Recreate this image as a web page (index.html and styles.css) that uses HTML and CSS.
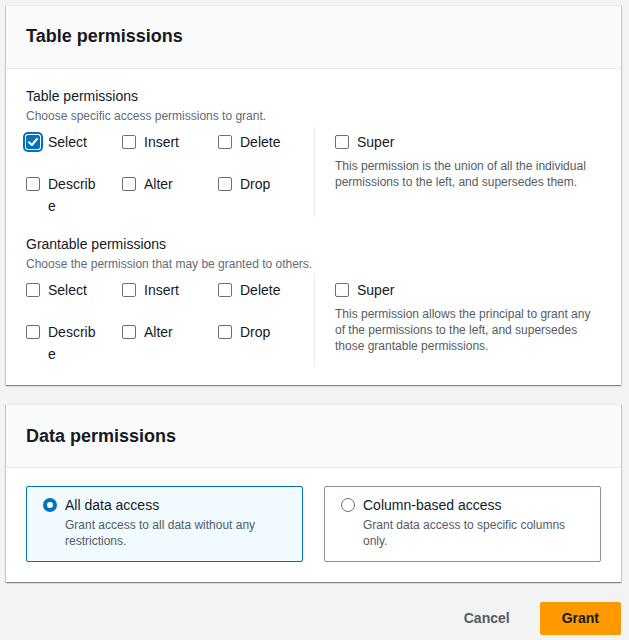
FILE: index.html
```html
<!DOCTYPE html>
<html lang="en">
<head>
<meta charset="utf-8">
<title>Permissions</title>
<link rel="stylesheet" href="styles.css">
</head>
<body>
<div class="page">
  <section class="card">
    <div class="card-header"><h2 class="card-title">Table permissions</h2></div>
    <div class="card-body">
      <div class="group">
        <div class="group-label">Table permissions</div>
        <div class="group-desc">Choose specific access permissions to grant.</div>
        <div class="perm-grid">
          <div class="perm-left">
            <div class="cb-item"><span class="cb cb-checked"><svg viewBox="0 0 14 14" width="14" height="14"><path d="M3 7.2 L5.9 10 L11 4" fill="none" stroke="#fff" stroke-width="2" stroke-linecap="round" stroke-linejoin="round"/></svg></span><span class="cb-label">Select</span></div>
            <div class="cb-item"><span class="cb"></span><span class="cb-label">Insert</span></div>
            <div class="cb-item"><span class="cb"></span><span class="cb-label">Delete</span></div>
            <div class="cb-item"><span class="cb"></span><span class="cb-label">Describe</span></div>
            <div class="cb-item"><span class="cb"></span><span class="cb-label">Alter</span></div>
            <div class="cb-item"><span class="cb"></span><span class="cb-label">Drop</span></div>
          </div>
          <div class="perm-right">
            <div class="cb-item"><span class="cb"></span><span class="cb-label cb-label-wide">Super</span></div>
            <p class="super-desc">This permission is the union of all the individual permissions to the left, and supersedes them.</p>
          </div>
        </div>
      </div>
      <div class="group group-next">
        <div class="group-label">Grantable permissions</div>
        <div class="group-desc">Choose the permission that may be granted to others.</div>
        <div class="perm-grid">
          <div class="perm-left">
            <div class="cb-item"><span class="cb"></span><span class="cb-label">Select</span></div>
            <div class="cb-item"><span class="cb"></span><span class="cb-label">Insert</span></div>
            <div class="cb-item"><span class="cb"></span><span class="cb-label">Delete</span></div>
            <div class="cb-item"><span class="cb"></span><span class="cb-label">Describe</span></div>
            <div class="cb-item"><span class="cb"></span><span class="cb-label">Alter</span></div>
            <div class="cb-item"><span class="cb"></span><span class="cb-label">Drop</span></div>
          </div>
          <div class="perm-right">
            <div class="cb-item"><span class="cb"></span><span class="cb-label cb-label-wide">Super</span></div>
            <p class="super-desc">This permission allows the principal to grant any of the permissions to the left, and supersedes those grantable permissions.</p>
          </div>
        </div>
      </div>
    </div>
  </section>

  <section class="card card-next">
    <div class="card-header"><h2 class="card-title">Data permissions</h2></div>
    <div class="card-body tiles">
      <div class="tile tile-selected">
        <span class="radio radio-on"></span>
        <div class="tile-text">
          <div class="tile-label">All data access</div>
          <div class="tile-desc">Grant access to all data without any restrictions.</div>
        </div>
      </div>
      <div class="tile">
        <span class="radio"></span>
        <div class="tile-text">
          <div class="tile-label">Column-based access</div>
          <div class="tile-desc">Grant data access to specific columns only.</div>
        </div>
      </div>
    </div>
  </section>

  <div class="footer">
    <button class="btn btn-link">Cancel</button>
    <button class="btn btn-primary">Grant</button>
  </div>
</div>
</body>
</html>
```

FILE: styles.css
```css
* { box-sizing: border-box; }
html, body { margin: 0; padding: 0; }
body {
  background: #f2f3f3;
  font-family: "Liberation Sans", Arial, sans-serif;
  color: #16191f;
  font-size: 14px;
}
.page {
  padding: 5px 8px 0 6px;
}
.card {
  background: #fff;
  border-top: 1px solid #eaeded;
  box-shadow: 0 1px 1px 0 rgba(0,28,36,.3), 1px 1px 1px 0 rgba(0,28,36,.15), -1px 1px 1px 0 rgba(0,28,36,.15);
}
.card-next { margin-top: 19px; }
.card-header {
  background: #fafafa;
  border-bottom: 1px solid #eaeded;
  padding: 19px 20px 21px;
}
.card-next .card-header {
  padding: 20px 20px 20px;
}
.card-title {
  margin: 0;
  font-size: 18px;
  line-height: 22px;
  font-weight: 700;
  color: #16191f;
}
.card-body {
  padding: 16px 20px 20px;
}
.group-next { margin-top: 16px; }
.group-label {
  font-size: 14px;
  line-height: 22px;
}
.group-desc {
  margin-top: 1px;
  font-size: 12px;
  line-height: 16px;
  color: #5f6b7a;
}
.perm-grid {
  margin-top: 3px;
  display: flex;
}
.perm-left {
  width: 288px;
  display: grid;
  grid-template-columns: 96px 96px 96px;
  row-gap: 20px;
  align-items: start;
  padding-top: 4px;
}
.perm-right {
  flex: 1;
  border-left: 1px solid #eaeded;
  padding: 4px 0 0 20px;
}
.cb-item {
  display: flex;
  align-items: flex-start;
  gap: 8px;
}
.cb {
  flex: none;
  width: 14px;
  height: 14px;
  margin-top: 4px;
  border: 1px solid #687078;
  border-radius: 2px;
  background: #fff;
}
.cb-checked {
  background: #0073bb;
  border-color: #0073bb;
  box-shadow: 0 0 0 1px #fff, 0 0 0 3px #0073bb;
  position: relative;
}
.cb-checked svg {
  position: absolute;
  left: -1px;
  top: -1px;
  display: block;
}
.cb-label {
  width: 50px;
  line-height: 22px;
  overflow-wrap: anywhere;
  word-break: break-all;
}
.cb-label-wide { width: auto; }
.super-desc {
  margin: 5px 0 0;
  font-size: 12px;
  line-height: 16px;
  color: #545b64;
}
.tiles {
  display: flex;
  gap: 21px;
  padding-top: 18px;
}
.tile {
  flex: 1;
  display: flex;
  align-items: flex-start;
  gap: 8px;
  border: 1px solid #879596;
  border-radius: 2px;
  padding: 7px 16px 12px;
}
.tile-selected {
  background: #f1faff;
  border-color: #0073bb;
}
.radio {
  flex: none;
  width: 14px;
  height: 14px;
  margin-top: 4px;
  border-radius: 50%;
  border: 1.5px solid #687078;
  background: #fff;
}
.radio-on {
  border: 4px solid #0073bb;
}
.tile-label {
  font-size: 14px;
  line-height: 22px;
}
.tile-desc {
  margin-top: 1px;
  font-size: 12px;
  line-height: 16px;
  color: #545b64;
}
.footer {
  display: flex;
  justify-content: flex-end;
  gap: 8px;
  padding-top: 20px;
}
.btn {
  font-family: inherit;
  font-size: 14px;
  font-weight: 700;
  line-height: 21px;
  padding: 5px 21px;
  border: 1px solid transparent;
  border-radius: 2px;
  cursor: pointer;
}
.btn-link {
  background: transparent;
  color: #545b64;
}
.btn-primary {
  background: #ff9900;
  border-color: #ff9900;
  color: #16191f;
}
```
